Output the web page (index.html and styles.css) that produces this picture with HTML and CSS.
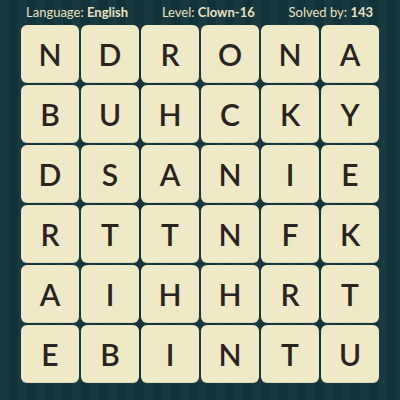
FILE: index.html
```html
<!DOCTYPE html>
<html>
<head>
<meta charset="utf-8">
<link rel="stylesheet" href="styles.css">
</head>
<body>
<div class="page">
  <div class="header">
    <span class="item">Language: <b>English</b></span>
    <span class="item">Level: <b>Clown-16</b></span>
    <span class="item">Solved by: <b>143</b></span>
  </div>
  <div class="grid">
    <div class="tile">N</div><div class="tile">D</div><div class="tile">R</div><div class="tile">O</div><div class="tile">N</div><div class="tile">A</div>
    <div class="tile">B</div><div class="tile">U</div><div class="tile">H</div><div class="tile">C</div><div class="tile">K</div><div class="tile">Y</div>
    <div class="tile">D</div><div class="tile">S</div><div class="tile">A</div><div class="tile">N</div><div class="tile">I</div><div class="tile">E</div>
    <div class="tile">R</div><div class="tile">T</div><div class="tile">T</div><div class="tile">N</div><div class="tile">F</div><div class="tile">K</div>
    <div class="tile">A</div><div class="tile">I</div><div class="tile">H</div><div class="tile">H</div><div class="tile">R</div><div class="tile">T</div>
    <div class="tile">E</div><div class="tile">B</div><div class="tile">I</div><div class="tile">N</div><div class="tile">T</div><div class="tile">U</div>
  </div>
</div>
</body>
</html>
```
FILE: styles.css
```css
html, body {
  margin: 0;
  padding: 0;
}
body {
  width: 400px;
  height: 400px;
  overflow: hidden;
  background-color: #153640;
  background-image: repeating-linear-gradient(90deg, #173a41 0px, #173a41 9px, #13333b 9px, #13333b 18px);
  font-family: "Lato", "DejaVu Sans", sans-serif;
}
.page {
  display: flex;
  flex-direction: column;
}
.header {
  height: 25px;
  display: flex;
  justify-content: space-between;
  align-items: center;
  padding: 0 27px 2px 26px;
  box-sizing: border-box;
  color: #e8e2c0;
  font-size: 13px;
}
.header b {
  font-weight: 700;
}
.grid {
  display: grid;
  grid-template-columns: repeat(6, 58px);
  grid-auto-rows: 58px;
  gap: 2px;
  margin-left: 21px;
}
.tile {
  background: #f0e9c6;
  border-radius: 6px;
  display: flex;
  align-items: center;
  justify-content: center;
  font-size: 30px;
  font-weight: 600;
  color: #2a241f;
  box-shadow: inset 0 -1px 0 rgba(0,0,0,0.08);
}
```
